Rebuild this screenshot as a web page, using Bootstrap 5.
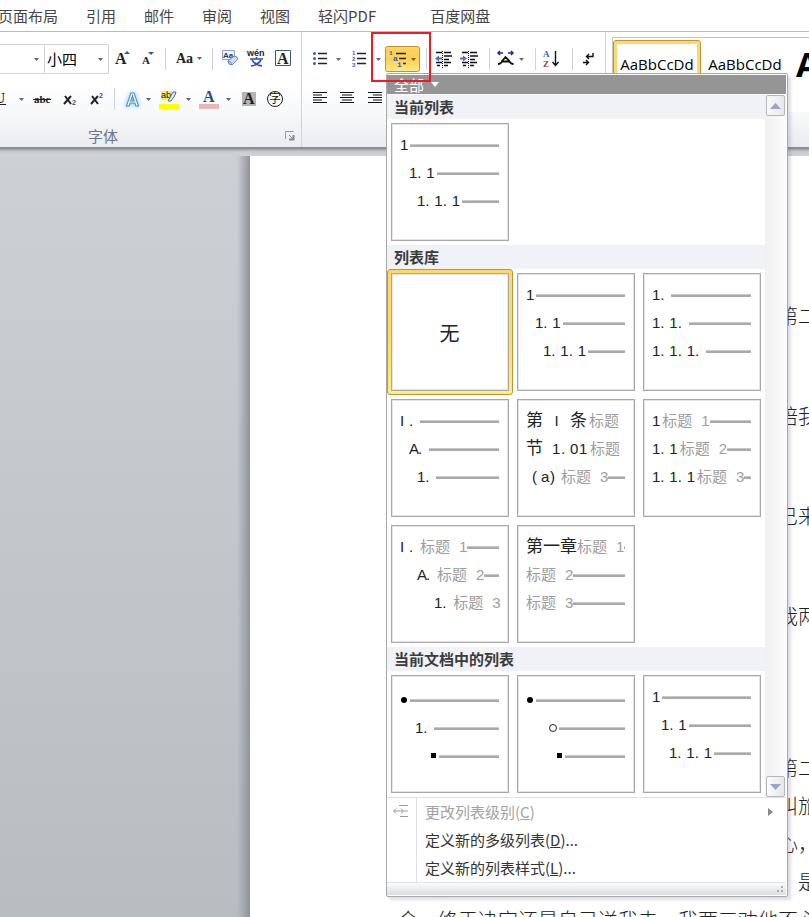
<!DOCTYPE html>
<html lang="zh-CN">
<head>
<meta charset="utf-8">
<meta name="viewport" content="width=device-width, initial-scale=1">
<title>多级列表</title>
<link href="https://cdn.jsdelivr.net/npm/bootstrap@5.3.0/dist/css/bootstrap.min.css" rel="stylesheet">
<style>
html,body{height:100%}
body{font-family:"Noto Sans CJK SC",sans-serif;font-size:15px;line-height:20px;color:#444;overflow:hidden;background:#fff}
button{font-family:inherit}
.tabs{height:32px;border-bottom:1px solid #b9bbbe;margin-left:-2px;gap:28px}
.tabs a{color:#444;text-decoration:none;line-height:32px}
.tabs .gap-tab{margin-left:26px}
.ribbon{height:117px;background:linear-gradient(#fff 0%,#fff 45%,#f5f7f9 75%,#e9ebf0 100%);border-bottom:2px solid #8b8f94}
.group{border-right:1px solid #d0d3d8;padding-top:12px}
.g-font{width:302px}
.g-para{width:304px;padding-left:8px}
.tool-row{height:30px}
.tool-row + .tool-row{margin-top:10px}
.tool{border:0;background:none;padding:0;display:block;height:30px;flex:none}
.tool svg,.preview svg{display:block}
.rule{width:10px;height:22px;flex:none;background:linear-gradient(90deg,transparent 5px,#cfd2d8 5px,#cfd2d8 6px,transparent 6px)}
.group-label{color:#6c7686;height:20px;margin-top:12px}
.group-label span{width:206px}
.pick{height:30px;border:1px solid #d2d4d9;border-radius:0;color:#000;padding:0 0 0 2px;font-size:15px;appearance:none;flex:none;
background:#fff url("data:image/svg+xml,%3Csvg xmlns='http://www.w3.org/2000/svg' width='5' height='3'%3E%3Cpath d='M0 0h5L2.500 3z' fill='%23666'/%3E%3C/svg%3E") no-repeat right 5px center}
.pick-name{width:44px;border-left:0;border-right:0}
.pick-size{width:65px}
.styles{margin:5px 0 0 6px;border:1px solid #c2c4c9;border-right:0;height:75px;background:#fff;padding-top:2px}
.style-item{border:1px solid transparent;background:#fff;color:#000;font:15px/20px "Open Sans",sans-serif;width:88px;height:72px;padding:0 0 24px;text-align:center;flex:none}
.style-item.on{border-color:#c2933a;border-radius:3px;box-shadow:inset 0 0 0 3px #ffd86b}
.style-item.big{font:bold 34px/40px "Open Sans",sans-serif;text-align:left;padding-left:6px}
.work{background:linear-gradient(#cdd0d5,#b9bdc1);padding-top:7px;box-shadow:inset 0 4px 3px -3px #8f9499}
.gutter{width:250px;flex:none;background:linear-gradient(90deg,transparent 237px,#8f9499 250px)}
.sheet{background:#fff;overflow:hidden;color:#222;font-size:20px;font-weight:300;line-height:38px;white-space:nowrap}
.sheet p{margin:0;padding-left:528px}
.sheet .far{margin-top:62px}
.sheet .first{margin-top:141px}
.sheet .block{margin-top:114px}
.sheet .full{padding-left:148px}
.gallery{position:absolute;left:2px;top:29px;width:402px;border:1px solid #a5a8ad;border-radius:2px;padding:1px 1px 1px 0;background:#fff;z-index:10;box-shadow:3px 3px 3px rgba(110,95,150,.22)}
.filter{width:100%;height:19px;border:0;background:#959595;color:#fff;padding:0 0 0 7px;line-height:19px;font-size:15px;gap:7px;margin-bottom:1px;text-align:left}
.heading{height:24px;background:#f0f2f7;font-size:15px;font-weight:700;line-height:24px;padding-left:7px;margin:0;color:#3b3b3b}
.cells{width:378px;flex:none}
.tile{width:126px;height:126px;padding:4px;border:0;background:none;flex:none}
.tile.on{background:linear-gradient(#ffd968,#ffd766 50%,#fff07c);border:1px solid #c2933a;border-radius:3px;padding:3px}
.preview{display:block;height:118px;border:1px solid #a8a8a8;box-shadow:inset 0 0 0 1px #e4e4e4;background:#fff;padding:7px 9px 0 8px;font:15px/28px "Liberation Sans","Noto Sans CJK SC",sans-serif;color:#222;text-align:left}
.preview.marks{padding-top:10px}
.none{font-size:20px;line-height:104px;text-align:center;font-family:"Noto Sans CJK SC",sans-serif}
.ln{display:flex;align-items:center;height:28px;white-space:nowrap}
.ln::after{content:"";flex:1;height:3px;background:#a9a9a9;border-top:1px solid #c9c9c9}
.ln.bare::after{display:none}
.ln b,.ln i{font-style:normal;font-weight:400;flex:none}
.ln b{margin-right:2px}
.ln i{color:#9d9d9d}
.ln u{display:inline-block;width:9px;text-decoration:none}
.ln em{font-style:normal;font-size:17px}
.in0{padding-left:6px}.in1{padding-left:9px}.in2{padding-left:17px}.in4{padding-left:34px}
.mk2{padding-left:15px}.mk2o{padding-left:23px}.mk3{padding-left:31px}
.scroller{width:21px;flex:none;background:linear-gradient(90deg,#f0f0f0,#fcfcfc);padding-left:1px}
.scroller button{width:19px;height:21px;border:1px solid #b3b7bc;border-radius:2px;background:linear-gradient(90deg,#fafafa,#e6e7ea);padding:0;display:block}
.scroller svg{display:block;margin:auto}
.cmds{border-top:1px solid #dfe1e5;border-bottom:1px solid #dfe1e5}
.cmds-icons{width:30px;border-right:1px solid #dfe1e5;padding:7px 0 0 6px}
.cmds-icons svg{display:block}
.cmd{border:0;background:none;padding:0 12px 0 8px;height:28px;font-size:15px;line-height:28px;color:#333;text-align:left}
.cmd:disabled{color:#a2a2a2}
.grip{height:12px;background:linear-gradient(#fbfbfc,#dcdee1)}
.callout{position:absolute;left:-13px;top:-12px;width:60px;height:50px;border:2px solid #ed1c24;z-index:20;pointer-events:none}
text{white-space:pre}
</style>
<script src="https://cdn.jsdelivr.net/npm/bootstrap@5.3.0/dist/js/bootstrap.bundle.min.js"></script>
</head>
<body>
<div class="d-flex flex-column h-100">
<nav class="tabs d-flex text-nowrap flex-shrink-0">
<a href="#">页面布局</a><a href="#">引用</a><a href="#">邮件</a><a href="#">审阅</a><a href="#">视图</a><a href="#">轻闪PDF</a><a href="#" class="gap-tab">百度网盘</a>
</nav>

<div class="ribbon d-flex flex-shrink-0">
<section class="group g-font flex-shrink-0">
 <div class="tool-row d-flex align-items-center">
  <select class="pick pick-name" aria-label="字体"><option></option></select>
  <select class="pick pick-size" aria-label="字号"><option>小四</option></select>
  <button class="tool" aria-label="增大字体"><svg width="25" height="30"><text x="6" y="20" font-family="Liberation Serif" font-weight="700" font-size="16" fill="#222">A</text><path d="M15 10l3-3 3 3z" fill="#2f559e"/></svg></button>
  <button class="tool" aria-label="缩小字体"><svg width="26" height="30"><text x="8" y="20" font-family="Liberation Serif" font-weight="700" font-size="11" fill="#222">A</text><path d="M14 8l3 3 3-3z" fill="#2f559e"/></svg></button>
  <span class="rule"></span>
  <button class="tool" aria-label="更改大小写"><svg width="37" height="30"><text x="6" y="19" font-family="Liberation Serif" font-weight="700" font-size="14" fill="#222">Aa</text><path d="M27 13h5l-2.500 3z" fill="#666"/></svg></button>
  <span class="rule"></span>
  <button class="tool" aria-label="清除格式"><svg width="26" height="30"><path d="M5.500 6.500h12v9h-12z" fill="#eef3fb" stroke="#8fa4c8"/><text x="6" y="14" font-family="Liberation Sans" font-weight="700" font-size="8" fill="#2b3d63">Aa</text><path d="M11 17l6-5q3 0 4 3l-6 6q-4 0-4-4z" fill="#d3dcf0" stroke="#6780b4"/><path d="M11 17q3 0 4 4" fill="none" stroke="#6780b4"/></svg></button>
  <button class="tool" aria-label="拼音指南"><svg width="27" height="30"><text x="4" y="12" font-family="Liberation Sans" font-weight="700" font-size="9" fill="#222">wén</text><path d="M7 15h13M13.500 13v2M9 16q3 5 10 6M18 16q-3 5-10 6" stroke="#2d50c0" stroke-width="1.600" fill="none"/></svg></button>
  <button class="tool" aria-label="字符边框"><svg width="28" height="30"><path d="M5.500 6.500h15v15h-15z" fill="#fff" stroke="#3f5878"/><text x="7" y="20" font-family="Liberation Serif" font-weight="700" font-size="16" fill="#222">A</text></svg></button>
 </div>
 <div class="tool-row d-flex align-items-center">
  <button class="tool" aria-label="下划线"><svg width="29" height="30"><text x="-5" y="19" font-family="Liberation Serif" font-weight="700" font-size="14" fill="#222">U</text><path d="M0 20.500h6" stroke="#222"/><path d="M19 14h5l-2.500 3z" fill="#666"/></svg></button>
  <button class="tool" aria-label="删除线"><svg width="27" height="30"><text x="5" y="19" font-family="Liberation Serif" font-weight="700" font-size="11" fill="#222">abc</text><path d="M4 15.500h18" stroke="#222"/></svg></button>
  <button class="tool" aria-label="下标"><svg width="27" height="30"><path d="M9 12l6 8M15 12l-7 8" stroke="#222" stroke-width="2"/><text x="16" y="21" font-family="Liberation Sans" font-weight="700" font-size="7" fill="#2f559e">2</text></svg></button>
  <button class="tool" aria-label="上标"><svg width="26" height="30"><path d="M9 12l6 8M15 12l-7 8" stroke="#222" stroke-width="2"/><text x="16" y="14" font-family="Liberation Sans" font-weight="700" font-size="7" fill="#2f559e">2</text></svg></button>
  <span class="rule"></span>
  <button class="tool" aria-label="文本效果"><svg width="35" height="30"><text x="7" y="22" font-family="Liberation Sans" font-weight="700" font-size="18" fill="#fff" stroke="#4a90c4" style="filter:drop-shadow(0 0 2px #6cc3ea)">A</text><path d="M27 14h5l-2.500 3z" fill="#666"/></svg></button>
  <button class="tool" aria-label="突出显示"><svg width="40" height="30"><path d="M7 7h11v9h-11z" fill="#f5f060"/><text x="7" y="14" font-family="Liberation Sans" font-size="9" fill="#111">ab</text><path d="M14 17l5-9h3l-1 3-4 6z" fill="#dfe8f8" stroke="#4a6aa8"/><path d="M5 20h20v5h-20z" fill="#ff0"/><path d="M32 14h5l-2.500 3z" fill="#666"/></svg></button>
  <button class="tool" aria-label="字体颜色"><svg width="40" height="30"><text x="9" y="18" font-family="Liberation Serif" font-weight="700" font-size="16" fill="#2a4a8a">A</text><path d="M5 20h20v5h-20z" fill="#e6b8b7"/><path d="M32 14h5l-2.500 3z" fill="#666"/></svg></button>
  <button class="tool" aria-label="字符底纹"><svg width="26" height="30"><path d="M8 8h14v14h-14z" fill="#b5b5b5"/><text x="9" y="20" font-family="Liberation Serif" font-weight="700" font-size="16" fill="#222">A</text></svg></button>
  <button class="tool" aria-label="带圈字符"><svg width="28" height="30"><circle cx="15" cy="15" r="7.500" fill="#fff" stroke="#222"/><text x="9" y="19" font-family="Noto Sans CJK SC" font-size="12" fill="#111">字</text></svg></button>
 </div>
 <div class="group-label d-flex align-items-center justify-content-between"><span class="text-center">字体</span><button class="tool" aria-label="字体对话框"><svg width="16" height="30"><path d="M.5 18v-7.500h8" stroke="#999" fill="none"/><path d="M4 14l4 4" stroke="#888"/><path d="M4 18.500h4.500v-4.500" stroke="#888" stroke-width="2" fill="none"/></svg></button></div>
</section>

<section class="group g-para flex-shrink-0">
 <div class="tool-row d-flex align-items-center">
  <button class="tool" aria-label="项目符号"><svg width="37" height="30"><path d="M8 9.500h9M8 14.500h9M8 19.500h9" stroke="#222" stroke-width="1.500"/><circle cx="4.500" cy="9.500" r="1.500" fill="#2f62b5"/><circle cx="4.500" cy="14.500" r="1.500" fill="#2f62b5"/><circle cx="4.500" cy="19.500" r="1.500" fill="#2f62b5"/><path d="M26 14h5l-2.500 3z" fill="#666"/></svg></button>
  <button class="tool" aria-label="编号"><svg width="37" height="30"><path d="M10 9.500h9M10 14.500h9M10 19.500h9" stroke="#222" stroke-width="1.500"/><g font-family="Liberation Sans" font-weight="700" font-size="6" fill="#2f62b5"><text x="5" y="11">1</text><text x="5" y="17">2</text><text x="5" y="23">3</text></g><path d="M29 14h5l-2.500 3z" fill="#666"/></svg></button>
  <div class="position-relative">
   <button class="tool" aria-label="多级列表" aria-expanded="true"><svg width="37" height="30"><defs><linearGradient id="gold" x2="0" y2="1"><stop stop-color="#ffd65f"/><stop offset=".5" stop-color="#ffcf55"/><stop offset="1" stop-color="#ffe886"/></linearGradient></defs><rect x="1.500" y="2.500" width="34" height="25" rx="2" fill="url(#gold)" stroke="#c29136"/><path d="M12 9.500h10M15 14.500h7M19 19.500h3" stroke="#222" stroke-width="1.500"/><g font-family="Liberation Mono" font-weight="700" font-size="8" fill="#2f62b5"><text x="5" y="11" font-size="6">1</text><text x="9" y="17">a</text><text x="13" y="23">i</text></g><path d="M27 14h5l-2.500 3z" fill="#735b24"/></svg></button>
   <div class="gallery">
    <button class="filter d-flex align-items-center"><span>全部</span><svg width="8" height="5"><path d="M0 0h8L4 5z" fill="#fff"/></svg></button>
    <div class="d-flex">
     <div class="cells">
      <h6 class="heading">当前列表</h6>
      <div class="d-flex flex-wrap">
       <button class="tile"><span class="preview"><span class="ln"><b>1</b></span><span class="ln in1"><b>1<u>.</u>1</b></span><span class="ln in2"><b>1<u>.</u>1<u>.</u>1</b></span></span></button>
      </div>
      <h6 class="heading">列表库</h6>
      <div class="d-flex flex-wrap">
       <button class="tile on"><span class="preview none">无</span></button>
       <button class="tile"><span class="preview"><span class="ln"><b>1</b></span><span class="ln in1"><b>1<u>.</u>1</b></span><span class="ln in2"><b>1<u>.</u>1<u>.</u>1</b></span></span></button>
       <button class="tile"><span class="preview"><span class="ln"><b>1<u>.</u></b></span><span class="ln"><b>1<u>.</u>1<u>.</u></b></span><span class="ln"><b>1<u>.</u>1<u>.</u>1<u>.</u></b></span></span></button>
       <button class="tile"><span class="preview"><span class="ln"><b><u>I</u><u>.</u></b></span><span class="ln in1"><b><u>A</u><u>.</u></b></span><span class="ln in2"><b>1<u>.</u></b></span></span></button>
       <button class="tile"><span class="preview"><span class="ln bare"><b><em>第</em><u>&nbsp;</u><u class="text-center">I</u><u>&nbsp;</u><em>条</em></b><i>标题</i></span><span class="ln bare"><b><em>节</em><u>&nbsp;</u><u>1</u><u>.</u><u>0</u><u>1</u></b><i>标题</i></span><span class="ln in0"><b><u>(</u><u>a</u><u>)</u></b><i>标题<u>&nbsp;</u>3</i></span></span></button>
       <button class="tile"><span class="preview"><span class="ln"><b>1</b><i>标题<u>&nbsp;</u>1</i></span><span class="ln"><b>1<u>.</u>1</b><i>标题<u>&nbsp;</u>2</i></span><span class="ln"><b>1<u>.</u>1<u>.</u>1</b><i>标题<u>&nbsp;</u>3</i></span></span></button>
       <button class="tile"><span class="preview"><span class="ln"><b><u>I</u><u>.</u></b><i>标题<u>&nbsp;</u>1</i></span><span class="ln in2"><b><u>A</u><u>.</u></b><i>标题<u>&nbsp;</u>2</i></span><span class="ln in4"><b>1<u>.</u></b><i>标题<u>&nbsp;</u>3</i></span></span></button>
       <button class="tile"><span class="preview"><span class="ln"><b class="me-0"><em>第一章</em></b><i>标题<u>&nbsp;</u>1</i></span><span class="ln"><i>标题<u>&nbsp;</u>2</i></span><span class="ln"><i>标题<u>&nbsp;</u>3</i></span></span></button>
      </div>
      <h6 class="heading">当前文档中的列表</h6>
      <div class="d-flex flex-wrap">
       <button class="tile"><span class="preview marks"><span class="ln"><b><svg width="8" height="8"><circle cx="4" cy="4" r="3" fill="#000"/></svg></b></span><span class="ln mk2"><b>1<u>.</u></b></span><span class="ln mk3"><b><svg width="6" height="6"><path d="M0 0h5v5h-5z" fill="#000"/></svg></b></span></span></button>
       <button class="tile"><span class="preview marks"><span class="ln"><b><svg width="8" height="8"><circle cx="4" cy="4" r="3" fill="#000"/></svg></b></span><span class="ln mk2o"><b><svg width="8" height="8"><circle cx="4" cy="4" r="3.500" fill="none" stroke="#222"/></svg></b></span><span class="ln mk3"><b><svg width="6" height="6"><path d="M0 0h5v5h-5z" fill="#000"/></svg></b></span></span></button>
       <button class="tile"><span class="preview"><span class="ln"><b>1</b></span><span class="ln in1"><b>1<u>.</u>1</b></span><span class="ln in2"><b>1<u>.</u>1<u>.</u>1</b></span></span></button>
      </div>
     </div>
     <div class="scroller d-flex flex-column justify-content-between">
      <button aria-label="向上"><svg width="11" height="6"><path d="M0 6h11L5.500 0z" fill="#97a4cb"/></svg></button>
      <button aria-label="向下"><svg width="11" height="6"><path d="M0 0h11L5.500 6z" fill="#97a4cb"/></svg></button>
     </div>
    </div>
    <div class="cmds d-flex">
     <div class="cmds-icons"><svg width="16" height="12"><path d="M6 .5h9M11 6h4M7 11.500h8" stroke="#999"/><path d="M1 6h9M3 3.500L.5 6 3 8.500M8 3.500L10.500 6 8 8.500" stroke="#999" fill="none"/></svg></div>
     <div class="flex-fill d-flex flex-column">
      <button class="cmd d-flex align-items-center justify-content-between" disabled><span>更改列表级别(<u>C</u>)</span><svg width="6" height="8"><path d="M0 0v8l5-4z" fill="#888"/></svg></button>
      <button class="cmd">定义新的多级列表(<u>D</u>)...</button>
      <button class="cmd">定义新的列表样式(<u>L</u>)...</button>
     </div>
    </div>
    <div class="grip d-flex justify-content-end align-items-end"><svg width="12" height="10"><path d="M7 1h2v2h-2zM3 5h2v2h-2zM7 5h2v2h-2z" fill="#a8adb5"/></svg></div>
   </div>
   <div class="callout"></div>
  </div>
  <span class="rule"></span>
  <button class="tool" aria-label="减少缩进"><svg width="26" height="30"><path d="M5 8.500h6M13 8.500h7M13 12h8M13 15.500h5M5 18.500h6M13 18.500h7M13 21.500h4M6 21.500h3" stroke="#111" stroke-width="1.600"/><path d="M11.500 7v17" stroke="#111" stroke-dasharray="1 1"/><path d="M4 14.500l4-3v2h3v2h-3v2z" fill="#3f73c4"/></svg></button>
  <button class="tool" aria-label="增加缩进"><svg width="27" height="30"><path d="M5 8.500h6M13 8.500h7M13 12h8M13 15.500h5M5 18.500h6M13 18.500h7M13 21.500h4M6 21.500h3" stroke="#111" stroke-width="1.600"/><path d="M11.500 7v17" stroke="#111" stroke-dasharray="1 1"/><path d="M10 14.500l-4-3v2h-3v2h3v2z" fill="#3f73c4"/></svg></button>
  <span class="rule"></span>
  <button class="tool" aria-label="中文版式"><svg width="36" height="30"><path d="M4 9h5M6 7l-2 2 2 2M19 9h-5M17 7l2 2-2 2" stroke="#1c2a9a" stroke-width="1.500" fill="none"/><path d="M4 20q3 0 5-4l2.500-3 3 3q2 4 5 4M7 17.500h9" stroke="#111" stroke-width="1.800" fill="none"/><path d="M25 14h5l-2.500 3z" fill="#666"/></svg></button>
  <span class="rule"></span>
  <button class="tool" aria-label="排序"><svg width="27" height="30"><g font-family="Liberation Serif" font-weight="700" font-size="9"><text x="3" y="13" fill="#2f62b5">A</text><text x="3" y="23" fill="#9c3a3a">Z</text></g><path d="M15.500 7v14M12.500 18l3 3.500 3-3.500" stroke="#111" fill="none" stroke-width="1.400"/></svg></button>
  <span class="rule"></span>
  <button class="tool" aria-label="显示编辑标记"><svg width="26" height="30"><path d="M16 9v3.500h-6M12 10l-2.500 2.500L12 15M6 18.500h5M9 16l2.500 2.500L9 21" stroke="#111" stroke-width="1.400" fill="none"/></svg></button>
 </div>
 <div class="tool-row d-flex align-items-center">
  <button class="tool" aria-label="左对齐"><svg width="27" height="30"><path d="M3 8.500h14M3 11h9M3 13.500h14M3 16h9M3 18.500h14" stroke="#111"/></svg></button>
  <button class="tool" aria-label="居中"><svg width="27" height="30"><path d="M3 8.500h14M5 11h10M3 13.500h14M5 16h10M3 18.500h14" stroke="#111"/></svg></button>
  <button class="tool" aria-label="右对齐"><svg width="27" height="30"><path d="M4 8.500h14M9 11h9M4 13.500h14M9 16h9M4 18.500h14" stroke="#111"/></svg></button>
 </div>
</section>

<section class="flex-fill overflow-hidden">
 <div class="styles d-flex">
  <button class="style-item on">AaBbCcDd</button><button class="style-item">AaBbCcDd</button><button class="style-item big">A</button>
 </div>
</section>
</div>

<main class="work d-flex flex-fill overflow-hidden">
 <div class="gutter"></div>
 <article class="sheet flex-fill">
  <p class="first">第二日</p>
  <p class="far">陪我</p>
  <p class="far">已来</p>
  <p class="far">我两</p>
  <p class="block">第二</p>
  <p>叫旅</p>
  <p>心，</p>
  <p>　是</p>
  <p class="full">会，终于决定还是自己送我去。我两三劝他不必</p>
 </article>
</main>
</div>
</body>
</html>
